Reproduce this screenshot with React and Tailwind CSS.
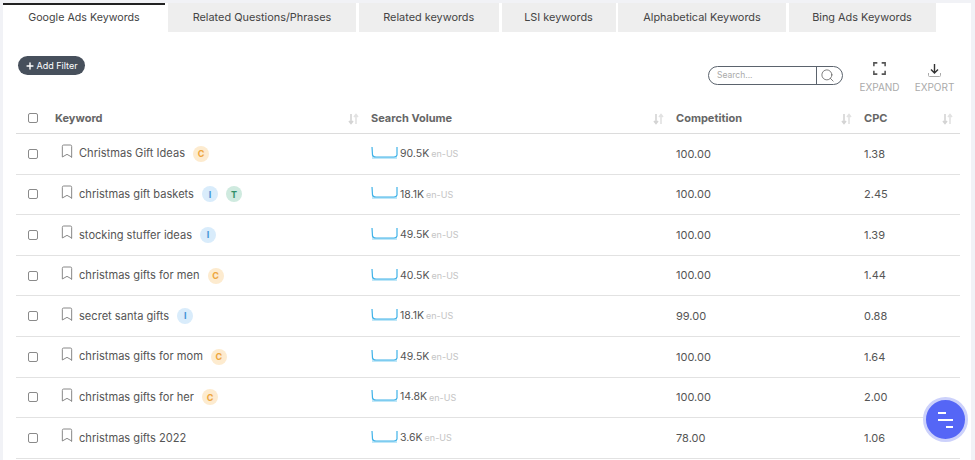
import { Search, Bookmark, Plus } from "lucide-react";

const rows = [
  { name: "Christmas Gift Ideas", tags: ["C"], vol: "90.5K", comp: "100.00", cpc: "1.38" },
  { name: "christmas gift baskets", tags: ["I", "T"], vol: "18.1K", comp: "100.00", cpc: "2.45" },
  { name: "stocking stuffer ideas", tags: ["I"], vol: "49.5K", comp: "100.00", cpc: "1.39" },
  { name: "christmas gifts for men", tags: ["C"], vol: "40.5K", comp: "100.00", cpc: "1.44" },
  { name: "secret santa gifts", tags: ["I"], vol: "18.1K", comp: "99.00", cpc: "0.88" },
  { name: "christmas gifts for mom", tags: ["C"], vol: "49.5K", comp: "100.00", cpc: "1.64" },
  { name: "christmas gifts for her", tags: ["C"], vol: "14.8K", comp: "100.00", cpc: "2.00" },
  { name: "christmas gifts 2022", tags: [], vol: "3.6K", comp: "78.00", cpc: "1.06" },
];

const tabs = [
  { label: "Related Questions/Phrases", w: "w-[188px]" },
  { label: "Related keywords", w: "w-[140px]" },
  { label: "LSI keywords", w: "w-[114px]" },
  { label: "Alphabetical Keywords", w: "w-[167.5px]" },
  { label: "Bing Ads Keywords", w: "w-[147px]" },
];

const tagStyles = {
  C: "bg-[#fdebcf] text-[#eda53c]",
  I: "bg-[#d9ecfb] text-[#3f93d6]",
  T: "bg-[#cfeadf] text-[#2f8f68]",
};

function SortIcon() {
  return (
    <svg width="11" height="12" viewBox="0 0 11 12" className="shrink-0">
      <path d="M3 1v9M1 8l2 2.5L5 8" fill="none" stroke="#d4d4d4" strokeWidth="1.6" />
      <path d="M8 11V2M6 4l2-2.5L10 4" fill="none" stroke="#e2e2e2" strokeWidth="1.6" />
    </svg>
  );
}

function Spark() {
  return (
    <svg width="27" height="14" viewBox="0 0 27 14" className="shrink-0 mb-[2px]">
      <path d="M1 1 L1.5 9 Q2 11 5 11 L23 11 Q25.5 11 26 9 L26 1 L26 13 L1 13 Z" fill="#bfe7f8" />
      <path d="M1 1 L1.5 9 Q2 11 5 11 L23 11 Q25.5 11 26 9 L26 1" fill="none" stroke="#3fb2e8" strokeWidth="1.2" />
    </svg>
  );
}

function Checkbox() {
  return <span className="block w-[10px] h-[10px] rounded-[2px] border border-[#8a8a8a] bg-white" />;
}

export default function App() {
  return (
    <div className="w-[975px] h-[460px] overflow-hidden bg-[#f1f2f6] pt-[3px] pl-[3px] pr-[4px] font-['Inter',sans-serif] relative">
      <div className="bg-white h-full">
        <div className="flex items-start">
          <div className="w-[162px] h-[29px] border-t-2 border-[#222] bg-white flex items-center justify-center text-[10.7px] text-[#444] mr-[3px]">
            Google Ads Keywords
          </div>
          <div className="flex gap-[2.75px]">
            {tabs.map((t) => (
              <div key={t.label} className={`${t.w} h-[29px] bg-[#eeeeee] flex items-center justify-center text-[10.9px] text-[#444]`}>
                {t.label}
              </div>
            ))}
          </div>
        </div>

        <div className="relative h-[72px] pt-[24px] pl-[15px]">
          <button className="w-[67px] h-[19px] rounded-full bg-[#47505c] text-white text-[9px] flex items-center justify-center gap-[1px]">
            <Plus size={10} strokeWidth={3.5} />
            Add Filter
          </button>
          <div className="absolute right-[18px] top-[28px] flex items-start">
            <div className="mt-[6px] w-[135px] h-[19px] rounded-full border border-[#5b636d] flex items-center mr-[17px]">
              <span className="w-[107px] pl-[8px] text-[8.5px] text-[#aaa]">Search...</span>
              <span className="h-full border-l border-[#5b636d] flex items-center pl-[3px]">
                <Search size={15} strokeWidth={1.2} className="text-[#555]" />
              </span>
            </div>
            <div className="w-[39px] flex flex-col items-center mr-[17px]">
              <svg width="13" height="13" viewBox="0 0 15 15" className="mt-[2px] mb-[7px]">
                <path d="M1 5V1h4M10 1h4v4M14 10v4h-4M5 14H1v-4" fill="none" stroke="#555" strokeWidth="1.8" />
              </svg>
              <span className="text-[10px] text-[#aaa] leading-none">EXPAND</span>
            </div>
            <div className="w-[37px] flex flex-col items-center">
              <svg width="15" height="15" viewBox="0 0 15 15" className="mt-[3px] mb-[4px]">
                <path d="M7.5 1v8M4 6.5l3.5 3.5L11 6.5" fill="none" stroke="#333" strokeWidth="1.4" />
                <path d="M1.5 10v2.5q0 1 1 1h10q1 0 1-1V10" fill="none" stroke="#aaa" strokeWidth="1" />
              </svg>
              <span className="text-[10px] text-[#aaa] leading-none">EXPORT</span>
            </div>
          </div>
        </div>

        <div className="grid grid-cols-[39px_316px_305px_188px_96px] h-[30px] items-center border-b border-[#dcdcdc] text-[11px] font-bold text-[#666] ml-[13px] w-[944px]">
          <div className="pl-[12px] pb-[2px]"><Checkbox /></div>
          <div className="flex items-center justify-between pr-[12px]">Keyword <SortIcon /></div>
          <div className="flex items-center justify-between pr-[12px]">Search Volume <SortIcon /></div>
          <div className="flex items-center justify-between pr-[12px]">Competition <SortIcon /></div>
          <div className="flex items-center justify-between pr-[7px]">CPC <SortIcon /></div>
        </div>

        {rows.map((r) => (
          <div key={r.name} className="grid grid-cols-[39px_316px_305px_188px_96px] h-[40.6px] items-center border-b border-[#e2e2e2] text-[11.1px] text-[#555] ml-[13px] w-[944px]">
            <div className="pl-[12px]"><Checkbox /></div>
            <div className="flex items-center">
              <Bookmark size={16} strokeWidth={1.5} className="text-[#888] mb-[5px] ml-[4px] mr-[4px]" />
              <span>{r.name}</span>
              {r.tags.map((t) => (
                <span key={t} className={`ml-[8px] w-[16px] h-[16px] rounded-full flex items-center justify-center text-[9px] font-bold ${tagStyles[t]}`}>
                  {t}
                </span>
              ))}
            </div>
            <div className="flex items-center gap-[2px]">
              <Spark />
              <span className="text-[10.5px]">{r.vol}</span>
              <span className="text-[9px] text-[#c4c4c4]">en-US</span>
            </div>
            <div className="text-[11px]">{r.comp}</div>
            <div className="text-[11px]">{r.cpc}</div>
          </div>
        ))}
      </div>

      <button className="absolute left-[923px] top-[397px] w-[45px] h-[45px] rounded-full bg-[#5566f6] border-[3px] border-[#ccd1fb] flex flex-col items-start justify-center gap-[5px] pl-[12px]">
        <span className="block w-[8px] h-[2px] bg-white" />
        <span className="block w-[15px] h-[2px] bg-white" />
        <span className="block w-[7px] h-[2px] bg-white ml-[8px]" />
      </button>
    </div>
  );
}
